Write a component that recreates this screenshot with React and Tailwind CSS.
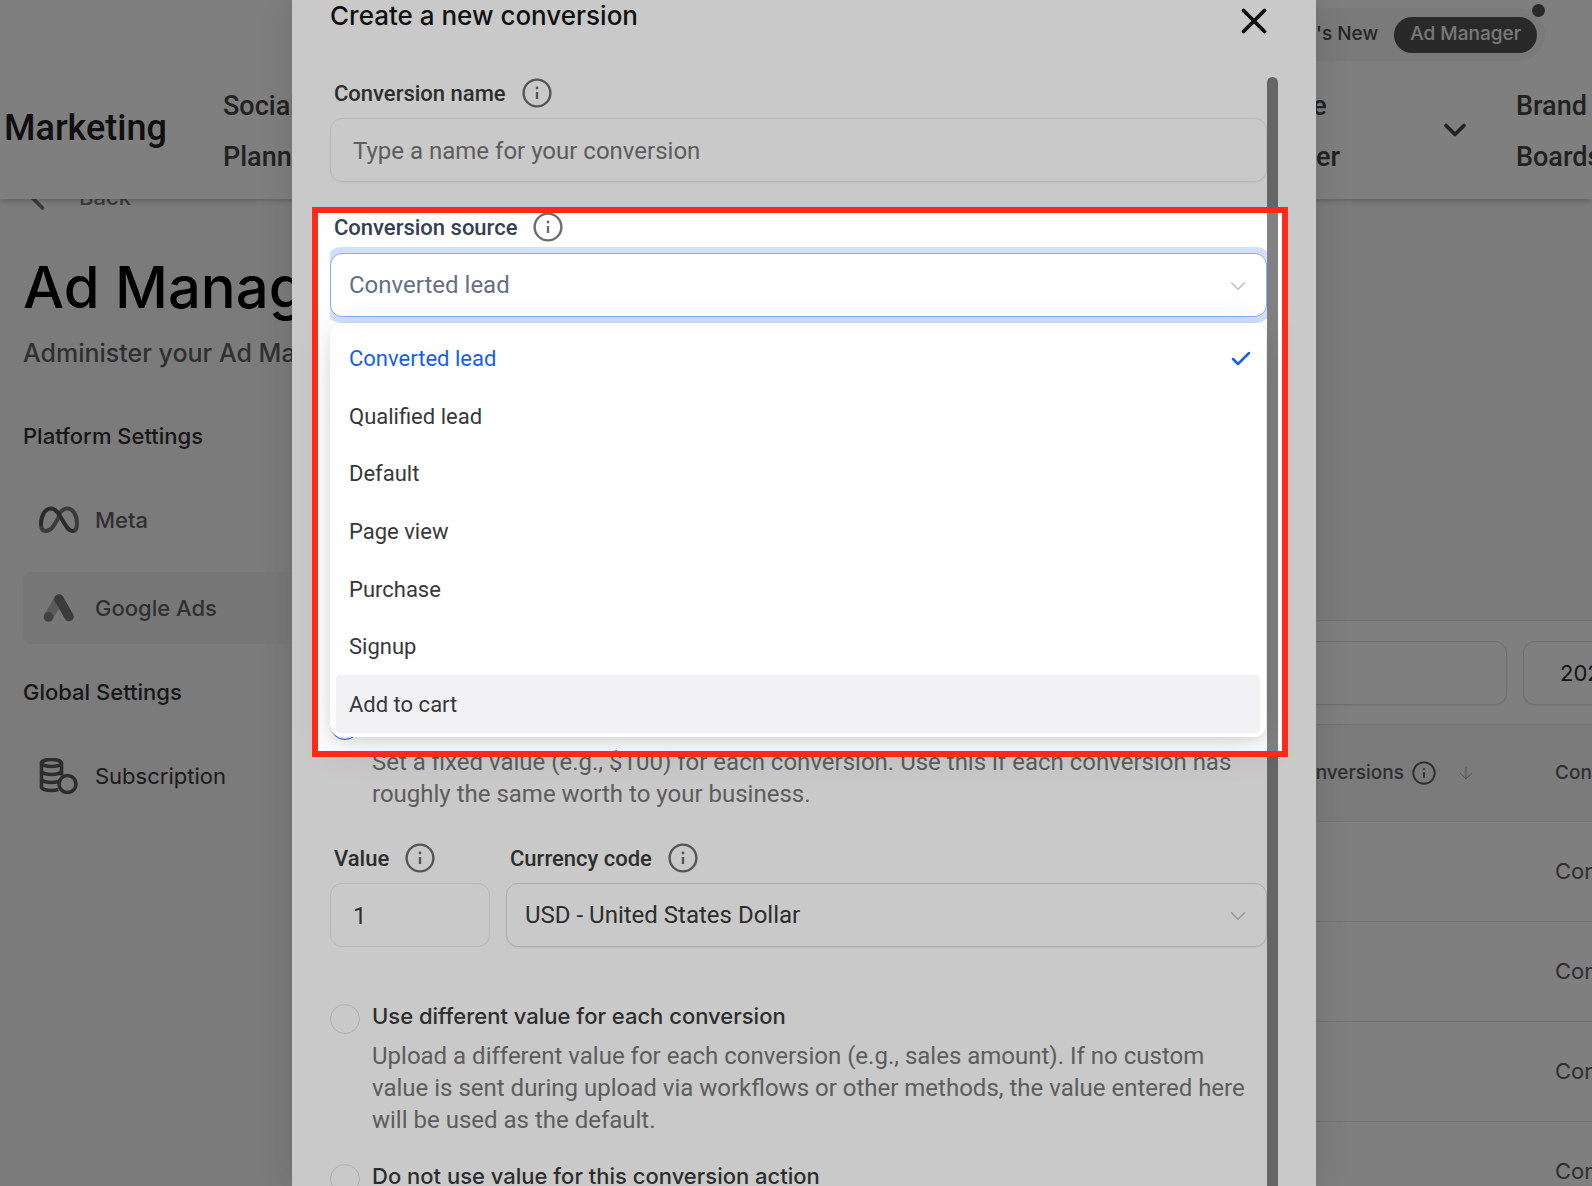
import { useState } from "react";
import { Check, ChevronDown, ChevronLeft, ArrowDown, X } from "lucide-react";

const SOURCES = [
  "Converted lead",
  "Qualified lead",
  "Default",
  "Page view",
  "Purchase",
  "Signup",
  "Add to cart",
];

const VALUE_OPTIONS = [
  {
    id: "different",
    title: "Use different value for each conversion",
    text: "Upload a different value for each conversion (e.g., sales amount). If no custom value is sent during upload via workflows or other methods, the value entered here will be used as the default.",
  },
  { id: "none", title: "Do not use value for this conversion action", text: "" },
];

function InfoIcon({ className }) {
  return (
    <svg className={className} viewBox="0 0 30 30" fill="none" stroke="currentColor" aria-hidden="true">
      <circle cx="15" cy="15" r="13.4" strokeWidth="2.4" />
      <path d="M15 14v7" strokeWidth="2.4" />
      <circle cx="15" cy="10" r="1.4" fill="currentColor" stroke="none" />
    </svg>
  );
}

function MetaIcon() {
  return (
    <svg className="w-10 h-7" viewBox="0 0 40 28" fill="none" strokeWidth="4" strokeLinecap="round" aria-hidden="true">
      <path
        d="M20 8.500C22.500 4 25.500 2.500 28.500 2.500C34 2.500 38 9.500 38 17.500C38 22.500 36.500 25 33.500 25"
        stroke="#777777"
      />
      <path d="M20 10.500C15 20 12 25 7 25C3.500 25 2 22.500 2 18.500" stroke="#777777" />
      <path
        d="M2 18.500C2 9.500 6 2.500 12 2.500C17 2.500 20 8 24 15C28 22 30 25 33.500 25"
        stroke="#575757"
      />
    </svg>
  );
}

function GoogleAdsIcon() {
  return (
    <svg className="w-10 h-7" viewBox="0 0 40 28" fill="none" strokeWidth="9.500" strokeLinecap="round" aria-hidden="true">
      <path d="M20 5L9.500 23" stroke="#b4b4b4" />
      <path d="M20 5L30 22.500" stroke="#777777" />
      <circle cx="9.500" cy="22.800" r="4.800" fill="#838383" />
    </svg>
  );
}

function CoinsIcon() {
  return (
    <svg className="w-10 h-9" viewBox="0 0 40 36" fill="none" stroke="#5c5c5c" strokeWidth="3.600" aria-hidden="true">
      <ellipse cx="12.500" cy="5" rx="10" ry="3.500" />
      <path d="M2.500 5v24c0 2 4.500 3.500 10 3.500c2.500 0 5-.3 6.800-1" />
      <path d="M22.500 5v12.500" />
      <path d="M2.500 13c0 2 4.500 3.500 10 3.500s10-1.500 10-3.500M2.500 21c0 2 4.500 3.500 10 3.500c2.500 0 4.500-.3 6.500-1" />
      <circle cx="28.500" cy="26" r="8.500" />
    </svg>
  );
}

function FieldLabel({ htmlFor, children, className = "" }) {
  return (
    <div className={`flex items-center gap-4 h-[30px] mb-[10px] pl-1 ${className}`}>
      <label htmlFor={htmlFor} className="text-[22px] font-medium whitespace-nowrap">
        {children}
      </label>
      <InfoIcon className="size-[30px] text-[#6d6d6d]" />
    </div>
  );
}

function NavItem({ children, className = "" }) {
  return (
    <a href="#" className={`block text-[27px] leading-[51px] font-medium text-[#464646] ${className}`}>
      {children}
    </a>
  );
}

function SideLink({ icon, children, className = "text-[#626262]" }) {
  return (
    <a href="#" className={`flex items-center gap-4 h-[72px] px-4 rounded-lg text-[22px] font-medium ${className}`}>
      {icon}
      {children}
    </a>
  );
}

function TopBar() {
  return (
    <header className="relative z-10 h-[199px] bg-white shadow-[0_1px_6px_rgba(0,0,0,0.25)]">
      <div className="flex justify-end h-20 pt-2 pr-[47px]">
        <div className="relative flex items-center gap-4 h-[53px] pl-6 pr-2 rounded-full bg-[#f5f5f5] font-['Inter',sans-serif] text-[19px] font-medium">
          <a href="#" className="text-[#4d4d4d]">What's New</a>
          <a href="#" className="flex items-center h-9 px-4 rounded-full bg-[#555555] text-[#f4f4f4]">Ad Manager</a>
          <span className="absolute -top-1 right-0 size-[13px] rounded-full bg-[#555555]" />
        </div>
      </div>
      <nav className="flex items-center h-[104px]">
        <span className="w-[223px] pl-1 pb-2 text-[36px] leading-[44px] font-medium text-[#202020]">Marketing</span>
        <NavItem className="w-[110px]">Social Planner</NavItem>
        <div className="flex items-center justify-between ml-auto w-[240px] mr-[43px]">
          <NavItem className="w-[110px]">Affiliate Manager</NavItem>
          <ChevronDown className="size-9 mb-1 text-[#464646]" strokeWidth={2.5} />
        </div>
        <NavItem className="w-[76px] overflow-hidden">Brand Boards</NavItem>
      </nav>
    </header>
  );
}

function Sidebar() {
  return (
    <aside className="w-[400px] pl-[23px] font-['Inter',sans-serif]">
      <a href="#" className="flex items-center gap-5 -mt-4 -ml-2 h-7 text-[22px] font-medium text-[#777777]">
        <ChevronLeft className="size-11" strokeWidth={2} />
        Back
      </a>
      <h1 className="mt-9 text-[58px] leading-[80px] font-medium whitespace-nowrap">Ad Manager</h1>
      <p className="mt-2 text-[25px] leading-9 font-medium text-[#626262] whitespace-nowrap">
        Administer your Ad Manager
      </p>
      <h2 className="mt-[49px] text-[22px] leading-8 font-medium text-[#303030]">Platform Settings</h2>
      <nav className="mt-8 flex flex-col gap-4">
        <SideLink icon={<MetaIcon />}>Meta</SideLink>
        <SideLink icon={<GoogleAdsIcon />} className="bg-[#f1f1f1] text-[#626262]">Google Ads</SideLink>
      </nav>
      <h2 className="mt-8 text-[22px] leading-8 font-medium text-[#303030]">Global Settings</h2>
      <nav className="mt-8">
        <a href="#" className="flex items-center gap-4 h-[72px] px-4 text-[22px] text-[#383838]">
          <CoinsIcon />
          Subscription
        </a>
      </nav>
    </aside>
  );
}

function Report() {
  return (
    <section className="flex-1 min-w-0 mt-[421px] bg-white border-t border-[#e4e4e4] font-['Inter',sans-serif]">
      <div className="flex gap-4 h-[103px] pt-5">
        <input
          aria-label="Search"
          className="flex-1 min-w-0 h-16 border border-[#dcdcdc] rounded-xl shadow-xs"
        />
        <button className="w-[69px] h-16 pl-9 border border-r-0 border-[#dcdcdc] rounded-l-xl shadow-xs overflow-hidden text-left text-[22px] text-[#303030]">
          2025
        </button>
      </div>
      <table className="w-full table-fixed border-t border-[#e4e4e4]">
        <thead>
          <tr className="h-[97px] bg-[#f9f9f9] text-[19px] text-[#606060]">
            <th className="font-medium">
              <div className="flex items-center justify-end gap-2 pr-[79px]">
                Conversions
                <InfoIcon className="size-6 text-[#606060]" />
                <ArrowDown className="size-5 ml-3 text-[#999999]" strokeWidth={1} />
              </div>
            </th>
            <th className="w-[37px] overflow-hidden whitespace-nowrap text-left font-medium">Conversion</th>
          </tr>
        </thead>
        <tbody>
          {[0, 1, 2, 3].map((row) => (
            <tr key={row} className="h-[100px] border-t border-[#ebebeb] text-[22px] text-[#606060]">
              <td />
              <td className="w-[37px] overflow-hidden whitespace-nowrap">Conversion</td>
            </tr>
          ))}
        </tbody>
      </table>
    </section>
  );
}

function SourceMenu({ value, onPick }) {
  return (
    <ul
      role="listbox"
      aria-label="Conversion sources"
      className="absolute z-10 top-full left-0 right-px flex flex-col h-[414px] px-[6px] pt-[7px] pb-1 rounded-xl bg-white shadow-[0_4px_10px_rgba(0,0,0,0.07),0_10px_40px_rgba(0,0,0,0.12)]"
    >
      {SOURCES.map((name) => (
        <li
          key={name}
          role="option"
          aria-selected={name === value}
          onClick={() => onPick(name)}
          className={`flex flex-1 items-center justify-between pl-[13px] pr-[7px] rounded text-[22px] ${
            name === value ? "text-[#155eef]" : "text-[#36383c]"
          } ${name === "Add to cart" ? "bg-[#f2f2f5]" : ""}`}
        >
          {name}
          {name === value && <Check className="size-6" strokeWidth={2.5} />}
        </li>
      ))}
    </ul>
  );
}

function Radio({ id, label, checked, onChange, className = "border-[#dedede]" }) {
  return (
    <input
      type="radio"
      id={id}
      name="value-mode"
      aria-label={label}
      checked={checked}
      onChange={onChange}
      className={`appearance-none shrink-0 size-[30px] mt-1 rounded-full border ${className}`}
    />
  );
}

function ConversionForm() {
  const [source, setSource] = useState("Converted lead");
  const [mode, setMode] = useState("same");

  return (
    <form className="flex-1 min-w-0 pt-px text-[#3a3a3a]">
      <FieldLabel htmlFor="name">Conversion name</FieldLabel>
      <input
        id="name"
        placeholder="Type a name for your conversion"
        className="block w-full h-16 px-[22px] pt-0.5 border border-[#e8e8e8] rounded-xl shadow-xs text-[24px] placeholder:text-[#767676]"
      />

      <FieldLabel htmlFor="source" className="mt-[30px] text-[#344054]">Conversion source</FieldLabel>
      {/* padded box clips the focus ring at the sides of the scroll area */}
      <div className="relative -mt-[5px]">
        <div className="relative overflow-hidden py-[6px]">
          <select
            id="source"
            value={source}
            onChange={(e) => setSource(e.target.value)}
            className="block w-full h-16 px-[18px] appearance-none bg-white border border-[#84adff] rounded-xl shadow-[0_0_0_6px_#d1e0ff] text-[24px] text-[#667085]"
          >
            {SOURCES.map((name) => (
              <option key={name}>{name}</option>
            ))}
          </select>
          <ChevronDown className="absolute right-4 top-[26px] size-[26px] text-[#c2c2c2] pointer-events-none" strokeWidth={1.5} />
        </div>
        <SourceMenu value={source} onPick={setSource} />
      </div>

      <div className="flex gap-3 mt-[383px]">
        <Radio
          id="same"
          label="Use the same value for each conversion"
          checked={mode === "same"}
          onChange={() => setMode("same")}
          className="border-[#155eef]"
        />
        <p className="mt-10 pr-4 text-[24px] leading-8 text-[#767676]">
          Set a fixed value (e.g., $100) for each conversion. Use this if each conversion has roughly the same worth
          to your business.
        </p>
      </div>

      <div className="flex gap-4 mt-[33px] mb-[53px]">
        <div className="w-[160px]">
          <FieldLabel htmlFor="value">Value</FieldLabel>
          <input
            id="value"
            defaultValue="1"
            className="block w-full h-16 px-[22px] pt-0.5 border border-[#e8e8e8] rounded-xl text-[24px]"
          />
        </div>
        <div className="relative flex-1">
          <FieldLabel htmlFor="currency">Currency code</FieldLabel>
          <select
            id="currency"
            className="block w-full h-16 px-[18px] appearance-none bg-white border border-[#dadada] rounded-xl shadow-xs text-[24px]"
          >
            <option>USD - United States Dollar</option>
          </select>
          <ChevronDown className="absolute right-4 bottom-[18px] size-[26px] text-[#c2c2c2] pointer-events-none" strokeWidth={1.5} />
        </div>
      </div>

      {VALUE_OPTIONS.map((o) => (
        <div key={o.id} className="flex gap-3 mb-6">
          <Radio id={o.id} label={o.title} checked={mode === o.id} onChange={() => setMode(o.id)} />
          <div className="pr-4">
            <label htmlFor={o.id} className="block font-['Inter',sans-serif] text-[22px] leading-8 font-medium">
              {o.title}
            </label>
            <p className="mt-2 text-[24px] leading-8 text-[#767676]">{o.text}</p>
          </div>
        </div>
      ))}
    </form>
  );
}

export default function App() {
  return (
    <div className="relative h-screen overflow-hidden bg-[#f7f7f7] font-['Roboto',sans-serif]">
      <TopBar />
      <div className="flex">
        <Sidebar />
        <Report />
      </div>

      {/* modal layer */}
      <div className="absolute inset-0 z-20 flex justify-center pl-4 bg-black/37">
        <div role="dialog" aria-labelledby="dialog-title" className="relative w-full max-w-5xl px-[38px] bg-white shadow-[0_0_32px_rgba(0,0,0,0.12)]">
          <div className="flex items-start justify-between h-[77px]">
            <h2 id="dialog-title" className="font-['Inter',sans-serif] text-[26px] leading-8 font-medium text-[#151515]">
              Create a new conversion
            </h2>
            <button aria-label="Close" className="mr-[3px] text-[#151515]">
              <X className="size-[42px]" strokeWidth={2.2} />
            </button>
          </div>

          <div className="flex">
            <ConversionForm />
            <div className="w-[11px] rounded-t-full bg-[#818181]" />
          </div>

          {/* spotlight: dims everything but the source field */}
          <div className="absolute z-30 top-[207px] left-5 right-7 h-[550px] border-[6px] border-[#ff2a1a] shadow-[0_0_0_2000px_rgba(0,0,0,0.21)] pointer-events-none" />
        </div>
      </div>
    </div>
  );
}
